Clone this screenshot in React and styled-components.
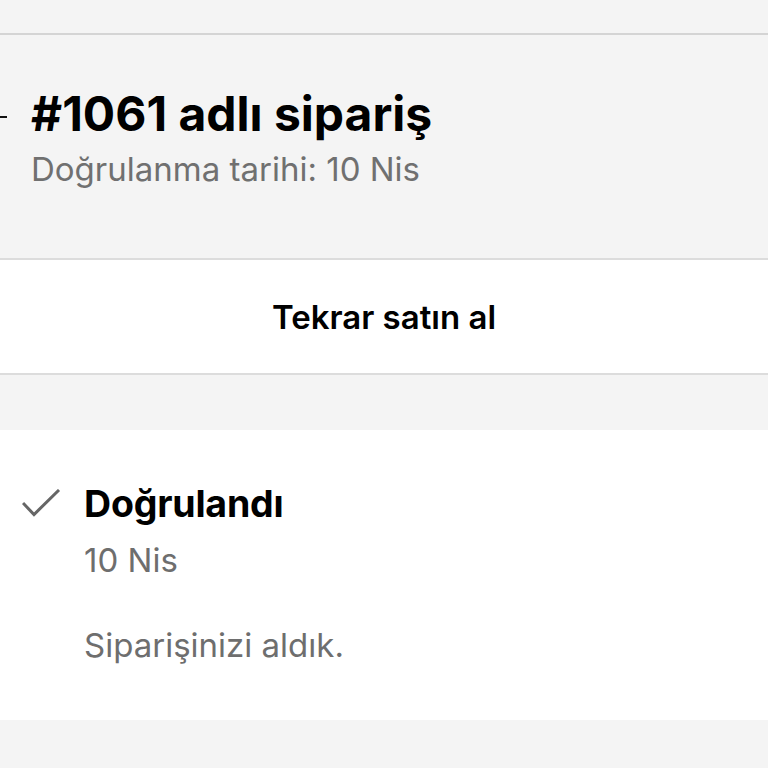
import React from 'react'
import styled, { createGlobalStyle } from 'styled-components'

const Global = createGlobalStyle`
  html, body {
    margin: 0;
    padding: 0;
    background: #f4f4f4;
    font-family: Inter, "Noto Sans", sans-serif;
    -webkit-font-smoothing: antialiased;
  }
`

const Page = styled.div`
  width: 768px;
  height: 768px;
  overflow: hidden;
  background: #f4f4f4;
`

const TopStrip = styled.div`
  height: 33px;
  border-bottom: 2px solid #d4d4d4;
`

const Header = styled.header`
  position: relative;
  height: 225px;
  padding: 51px 0 0 31px;
  box-sizing: border-box;
  border-bottom: 2px solid #dcdcdc;
`

const BackStub = styled.span`
  position: absolute;
  left: 0;
  top: 81px;
  width: 7px;
  height: 2px;
  background: #111;
`

const Title = styled.h1`
  margin: 0;
  font-size: 48px;
  line-height: 56px;
  font-weight: 700;
  letter-spacing: 0;
  color: #000;
`

const Subtitle = styled.p`
  margin: 7px 0 0;
  font-size: 33px;
  line-height: 40px;
  font-weight: 400;
  color: #707070;
`

const ActionRow = styled.button`
  display: flex;
  align-items: center;
  justify-content: center;
  width: 100%;
  height: 115px;
  padding: 0;
  border: 0;
  border-bottom: 2px solid #dcdcdc;
  background: #fff;
  font-family: inherit;
  font-size: 33px;
  font-weight: 600;
  color: #000;
`

const Gap = styled.div`
  height: 55px;
`

const Card = styled.section`
  display: flex;
  gap: 22px;
  height: 290px;
  padding: 52px 0 0 22px;
  box-sizing: border-box;
  background: #fff;
`

const IconCol = styled.div`
  padding-top: 7px;
`

const Content = styled.div`
  display: flex;
  flex-direction: column;
`

const StepTitle = styled.h2`
  margin: 0;
  font-size: 37.5px;
  line-height: 44px;
  font-weight: 700;
  letter-spacing: -0.2px;
  color: #000;
`

const Meta = styled.p`
  margin: ${p => p.$top}px 0 0;
  font-size: 33px;
  line-height: 40px;
  color: #6e6e6e;
`

const Check = () => (
  <svg width="40" height="30" viewBox="0 0 40 30" fill="none">
    <path d="M1 14 L12 25.5 L37 1" stroke="#666" strokeWidth="3" />
  </svg>
)

export default function App() {
  return (
    <Page>
      <Global />
      <TopStrip />
      <Header>
        <BackStub />
        <Title>#1061 adlı sipariş</Title>
        <Subtitle>Doğrulanma tarihi: 10 Nis</Subtitle>
      </Header>
      <ActionRow>Tekrar satın al</ActionRow>
      <Gap />
      <Card>
        <IconCol>
          <Check />
        </IconCol>
        <Content>
          <StepTitle>Doğrulandı</StepTitle>
          <Meta $top={14}>10 Nis</Meta>
          <Meta $top={45}>Siparişinizi aldık.</Meta>
        </Content>
      </Card>
    </Page>
  )
}
